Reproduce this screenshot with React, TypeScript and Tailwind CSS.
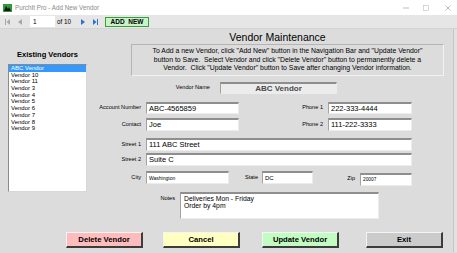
import type { ReactNode } from "react";

const vendors = ["ABC Vendor", "Vendor 10", "Vendor 11", "Vendor 3", "Vendor 4", "Vendor 5", "Vendor 6", "Vendor 7", "Vendor 8", "Vendor 9"];

const inset =
  "border border-t-2 border-t-[#8e8e8e] border-l-[#a2a2a2] border-r-[#ececec] border-b-[#ececec]";

function Label({ w, children }: { w: string; children: ReactNode }) {
  return <div className={`${w} shrink-0 text-right text-[5.6px] leading-none text-black`}>{children}</div>;
}

function Field({ w, h = "h-[13px]", text = "text-[7.5px]", children }: { w: string; h?: string; text?: string; children?: ReactNode }) {
  return (
    <div className={`${w} ${h} ${inset} shrink-0 bg-white pl-[2px] ${text} leading-[10px] text-black whitespace-nowrap overflow-hidden`}>
      {children}
    </div>
  );
}

function Btn({ bg, children }: { bg: string; children: ReactNode }) {
  return (
    <div
      className={`${bg} w-[77px] h-[16px] shrink-0 flex items-center justify-center border-t border-l border-t-[#f4f4f4] border-l-[#f4f4f4] border-b-2 border-r-2 border-b-[#3c3c3c] border-r-[#3c3c3c] text-[7.7px] font-bold text-black`}
    >
      {children}
    </div>
  );
}

export default function App() {
  return (
    <div className="w-[457px] h-[253px] overflow-hidden bg-[#dcdcdc] font-['Liberation_Sans',Arial,sans-serif]">
      {/* title bar */}
      <div className="h-[15px] bg-white flex items-center">
        <svg className="ml-[3px]" width="9" height="8" viewBox="0 0 9 8">
          <rect width="9" height="8" fill="#2e9a3a" />
          <path d="M1 7 L3 2 L5 5 L6 3 L8 7 Z" fill="#111" />
        </svg>
        <span className="ml-[3px] text-[6.3px] text-[#8a8a8a]">PurchIt Pro - Add New Vendor</span>
        <div className="ml-auto flex items-center">
          <svg width="6" height="6" viewBox="0 0 6 6" className="mr-[14px]">
            <line x1="0" y1="3" x2="6" y2="3" stroke="#a0a0a0" strokeWidth="0.7" />
          </svg>
          <svg width="6" height="6" viewBox="0 0 6 6" className="mr-[16px]">
            <rect x="0.5" y="0.5" width="5" height="5" fill="none" stroke="#c8c8c8" strokeWidth="0.7" />
          </svg>
          <svg width="6" height="6" viewBox="0 0 6 6" className="mr-[6px]">
            <path d="M0.5 0.5 L5.5 5.5 M5.5 0.5 L0.5 5.5" stroke="#a0a0a0" strokeWidth="0.7" />
          </svg>
        </div>
      </div>

      {/* navigation bar */}
      <div className="h-[14px] bg-[#e6e6e6] flex items-center border-b border-b-[#d4d4d4]">
        <svg className="ml-[5px]" width="5" height="6" viewBox="0 0 5 6">
          <rect x="0" y="0" width="1" height="6" fill="#a8a8a8" />
          <path d="M5 0 L1.5 3 L5 6 Z" fill="#a8a8a8" />
        </svg>
        <svg className="ml-[8px]" width="4" height="6" viewBox="0 0 4 6">
          <path d="M4 0 L0 3 L4 6 Z" fill="#a8a8a8" />
        </svg>
        <div className="ml-[8px] w-[25px] h-[11px] bg-white text-[6.5px] leading-[11px] pl-[3px] text-black">1</div>
        <span className="ml-[2px] text-[6.3px] text-black">of 10</span>
        <svg className="ml-[10px]" width="4" height="6" viewBox="0 0 4 6">
          <path d="M0 0 L4 3 L0 6 Z" fill="#2f6fd8" />
        </svg>
        <svg className="ml-[8px]" width="5" height="6" viewBox="0 0 5 6">
          <path d="M0 0 L3.5 3 L0 6 Z" fill="#2f6fd8" />
          <rect x="4" y="0" width="1" height="6" fill="#2f6fd8" />
        </svg>
        <div className="ml-[7px] w-[44px] h-[10px] bg-[#c8f3c8] border border-[#3a9e3a] flex items-center justify-center text-[6.5px] font-bold text-black whitespace-pre">
          ADD  NEW
        </div>
      </div>

      {/* body */}
      <div className="flex h-[223px]">
        <div className="w-[453px] shrink-0 flex flex-col">
          <div className="flex h-[190px]">
            {/* existing vendors */}
            <div className="w-[95px] shrink-0 pl-[8px]">
              <div className="w-[79px] mt-[21px] h-[9px] text-center text-[7.5px] leading-[9px] font-bold text-black">Existing Vendors</div>
              <div className="w-[79px] h-[128px] mt-[5px] bg-white border border-[#8a8a8a] border-r-[#d8d8d8] border-b-[#d8d8d8]">
                {vendors.map((v, i) => (
                  <div
                    key={v}
                    className={`h-[6.7px] leading-[6.7px] text-[6px] pl-[2px] ${i === 0 ? "bg-[#3399ff] text-white" : "text-black"}`}
                  >
                    {v}
                  </div>
                ))}
              </div>
            </div>

            {/* form */}
            <div className="flex-1 flex flex-col">
              <div className="mt-[2px] h-[12px] pl-[7px] text-center text-[10.5px] leading-[12px] text-black">Vendor Maintenance</div>
              <div className="mt-[1px] ml-[36px] w-[313px] h-[32px] border border-[#b4b4b4] border-r-[#f2f2f2] border-b-[#f2f2f2] pt-[2px] text-center text-[6.9px] leading-[8.7px] text-black whitespace-pre">
                {"To Add a new Vendor, click \"Add New\" button in the Navigation Bar and \"Update Vendor\""}
                <br />
                {"button to Save.  Select Vendor and click \"Delete Vendor\" button to permanently delete a"}
                <br />
                {"Vendor.  Click \"Update Vendor\" button to Save after changing Vendor information."}
              </div>

              <div className="mt-[6px] flex items-center">
                <Label w="w-[115px]">Vendor Name</Label>
                <div className={`ml-[10px] w-[117px] h-[12px] ${inset} bg-[#ececec] text-center text-[8px] leading-[9px] font-bold text-[#4a4a4a]`}>
                  ABC Vendor
                </div>
              </div>

              <div className="mt-[8px] flex items-center">
                <Label w="w-[46px]">Account Number</Label>
                <div className="ml-[5px]"><Field w="w-[93px]" h="h-[12px]">ABC-4565859</Field></div>
                <Label w="w-[84px]">Phone 1</Label>
                <div className="ml-[5px]"><Field w="w-[84px]" h="h-[12px]">222-333-4444</Field></div>
              </div>

              <div className="mt-[4px] flex items-center">
                <Label w="w-[46px]">Contact</Label>
                <div className="ml-[5px]"><Field w="w-[93px]">Joe</Field></div>
                <Label w="w-[84px]">Phone 2</Label>
                <div className="ml-[5px]"><Field w="w-[84px]">111-222-3333</Field></div>
              </div>

              <div className="mt-[7px] flex items-center">
                <Label w="w-[46px]">Street 1</Label>
                <div className="ml-[5px]"><Field w="w-[266px]">111 ABC Street</Field></div>
              </div>

              <div className="mt-[2px] flex items-center">
                <Label w="w-[46px]">Street 2</Label>
                <div className="ml-[5px]"><Field w="w-[266px]">Suite C</Field></div>
              </div>

              <div className="mt-[5px] flex items-start h-[15px]">
                <div className="mt-[4px]"><Label w="w-[46px]">City</Label></div>
                <div className="ml-[5px]"><Field w="w-[83px]" text="text-[5px]">Washington</Field></div>
                <div className="mt-[4px]"><Label w="w-[29px]">State</Label></div>
                <div className="ml-[4px]"><Field w="w-[51px]" text="text-[6px]">DC</Field></div>
                <div className="mt-[5px]"><Label w="w-[42px]">Zip</Label></div>
                <div className="ml-[5px] mt-[2px]"><Field w="w-[52px]" text="text-[4.8px]">20007</Field></div>
              </div>

              <div className="mt-[6px] flex items-start">
                <div className="mt-[4px]"><Label w="w-[80px]">Notes</Label></div>
                <div className={`ml-[5px] w-[199px] h-[27px] ${inset} bg-white pl-[3px] pt-[1px] text-[6.8px] leading-[7px] text-black`}>
                  Deliveries Mon - Friday
                  <br />
                  Order by 4pm
                </div>
              </div>
            </div>
          </div>

          {/* buttons */}
          <div className="mt-[13px] flex">
            <div className="ml-[66px]"><Btn bg="bg-[#ffbcbc]">Delete Vendor</Btn></div>
            <div className="ml-[20px]"><Btn bg="bg-[#ffffc2]">Cancel</Btn></div>
            <div className="ml-[22px]"><Btn bg="bg-[#c2fcc2]">Update Vendor</Btn></div>
            <div className="ml-[27px]"><Btn bg="bg-[#cbcbcb]">Exit</Btn></div>
          </div>
        </div>
        <div className="flex-1 border-l border-l-[#c4c4c4] bg-[#e2e2e2]" />
      </div>
    </div>
  );
}
